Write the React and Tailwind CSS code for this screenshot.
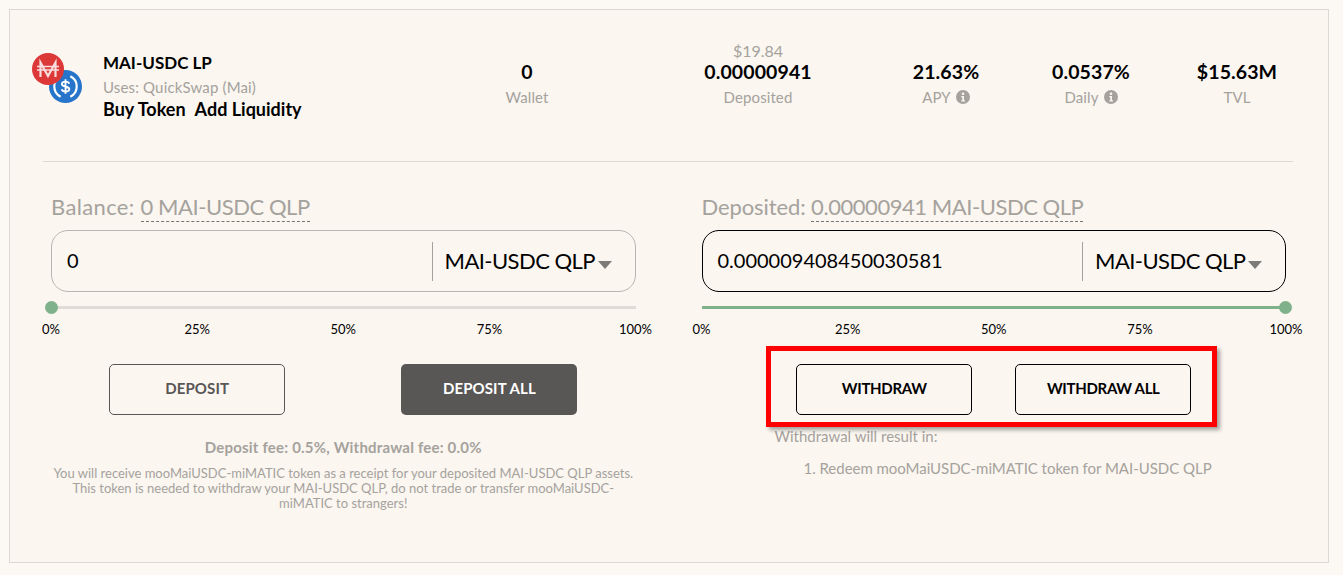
function Stat({ top, value, label, info, width = "w-[100px]", margin = "" }) {
  return (
    <div className={`flex flex-col items-center ${width} ${margin}`}>
      {top && <div className="text-[16px] leading-[20px] text-[#a5a29d] mb-[-1px]">{top}</div>}
      <div className="text-[19.5px] leading-[24px] font-bold text-black tracking-[0.1px]">{value}</div>
      <div className="mt-[1px] flex items-center gap-[5px] text-[15px] leading-[24px] text-[#a5a29d] tracking-[0.1px]">
        {label}
        {info && (
          <svg width="14" height="14" viewBox="0 0 14 14" className="shrink-0">
            <circle cx="7" cy="7" r="7" fill="#a5a29d" />
            <circle cx="7" cy="3.7" r="1.3" fill="#fbf6f0" />
            <path d="M5.3 6h2.7v4.2h1v1.2H5.3v-1.2h1V7.2h-1z" fill="#fbf6f0" />
          </svg>
        )}
      </div>
    </div>
  );
}

function TokenIcons() {
  return (
    <div className="relative w-[50px] h-[50px] shrink-0">
      <svg width="33" height="33" viewBox="0 0 34 34" className="absolute left-[17px] top-[17px]">
        <circle cx="17" cy="17" r="17" fill="#2775ca" />
        <path d="M12 6.500a11.700 11.700 0 0 0 0 21" fill="none" stroke="#fff" strokeWidth="2.200" />
        <path d="M22 6.500a11.700 11.700 0 0 1 0 21" fill="none" stroke="#fff" strokeWidth="2.200" />
        <path d="M20.800 14.200c-.4-1.500-1.800-2.200-3.800-2.200-2.300 0-3.700 1-3.700 2.500 0 3.900 7.700 1.600 7.700 5.200 0 1.700-1.600 2.600-3.900 2.600-2.200 0-3.600-.8-4-2.400M17 9.500v15" fill="none" stroke="#fff" strokeWidth="1.900" />
      </svg>
      <svg width="32" height="32" viewBox="0 0 32 32" className="absolute left-0 top-0">
        <circle cx="16" cy="16" r="16" fill="#dc3838" />
        <path d="M8.500 24V9.500L16 23l7.500-13.500V24" fill="none" stroke="#f9dcdc" strokeWidth="2.200" />
        <path d="M5 13.500h22M5 17h22" stroke="#f9dcdc" strokeWidth="1.300" />
      </svg>
    </div>
  );
}

function Caret() {
  return (
    <svg width="14" height="8" viewBox="0 0 14 8" className="shrink-0 mt-[9px] ml-[3px]">
      <path d="M0 0h14L7 8z" fill="#7d7b78" />
    </svg>
  );
}

function Panel({ label, amount, value, active, pct, labelClass }) {
  return (
    <div className="w-[584.5px]">
      <div className="h-[44px] flex items-start pt-[7px] text-[22px] leading-[28px] text-[#a5a29d]">
        <span className={labelClass}>{label}:&nbsp;</span>
        <span className="tracking-[-0.45px] border-b border-dashed border-[#77746f] h-[29px]">{amount}</span>
      </div>
      <div className={`h-[62px] rounded-[17px] border flex items-center ${active ? "border-black" : "border-[#b9b6b1]"}`}>
        <div className="flex-1 pl-[15px] pb-[2px] text-[20px] text-black">{value}</div>
        <div className="w-px h-[39px] bg-[#a5a29d]" />
        <div className="w-[202px] pl-[12px] pb-[2px] flex items-center text-[22px] tracking-[-0.55px] text-black">
          MAI-USDC QLP
          <Caret />
        </div>
      </div>
      <div className="relative mt-[14px] h-[3px] bg-[#e0dbd6]">
        {pct > 0 && <div className="h-full w-full bg-[#7fb28b]" />}
        <div className={`absolute top-[-5px] w-[13px] h-[13px] rounded-full bg-[#7fb28b] ${pct > 0 ? "right-[-6px]" : "left-[-6px]"}`} />
      </div>
      <div className="mt-[12px] flex justify-between mx-[-20px] text-[13px] leading-[16px] text-black">
        {["0%", "25%", "50%", "75%", "100%"].map((t) => (
          <span key={t} className="w-[40px] text-center">{t}</span>
        ))}
      </div>
    </div>
  );
}

function Btn({ children, kind }) {
  const styles = {
    outline: "border border-[#595755] text-[#595755] tracking-[0.1px]",
    solid: "bg-[#595755] text-white tracking-[0.1px]",
    black: "border border-black text-black tracking-[-0.3px]",
  };
  return (
    <button className={`w-[176px] h-[51px] rounded-[5px] pb-[2px] text-[15px] font-bold ${styles[kind]}`}>
      {children}
    </button>
  );
}

export default function App() {
  return (
    <div className="min-h-[575px] bg-[#fcf9f5] p-[9px] font-['Lato','Open_Sans',sans-serif]">
      <div className="relative w-[1320px] h-[554px] border border-[#ddd8d2] bg-[#fbf6f0]">
        <div className="h-[151px] flex items-start pl-[22px] pt-[30px]">
          <div className="flex w-[445px] pt-[13px]">
            <TokenIcons />
            <div className="ml-[21px] mt-[-2px]">
              <div className="text-[17px] leading-[24px] font-bold text-black">MAI-USDC LP</div>
              <div className="text-[15px] leading-[24px] text-[#a5a29d] tracking-[0.15px]">Uses: QuickSwap (Mai)</div>
              <div className="text-[18px] leading-[20px] font-bold text-black">
                <span>Buy Token</span>
                <span className="ml-[9px]">Add Liquidity</span>
              </div>
            </div>
          </div>
          <div className="flex items-end h-[69px]">
            <Stat value="0" label="Wallet" />
            <Stat top="$19.84" value="0.00000941" label="Deposited" width="w-[200px]" margin="ml-[81px]" />
            <Stat value="21.63%" label="APY" info margin="ml-[38px]" />
            <Stat value="0.0537%" label="Daily" info margin="ml-[45px]" />
            <Stat value="$15.63M" label="TVL" margin="ml-[46px]" />
          </div>
        </div>
        <div className="ml-[33px] mr-[35px] h-px bg-[#ddd8d2]" />
        <div className="flex gap-[66px] pl-[41px] pt-[24px]">
          <div>
            <Panel label="Balance" labelClass="tracking-[0.35px]" amount="0 MAI-USDC QLP" value="0" pct={0} />
            <div className="flex mt-[27px]">
              <div className="flex-1 flex justify-center"><Btn kind="outline">DEPOSIT</Btn></div>
              <div className="flex-1 flex justify-center"><Btn kind="solid">DEPOSIT ALL</Btn></div>
            </div>
            <div className="mt-[22px] text-center text-[15px] leading-[20px] font-bold text-[#a5a29d] tracking-[0.2px]">
              Deposit fee: 0.5%, Withdrawal fee: 0.0%
            </div>
            <div className="mt-[9px] text-center text-[13px] leading-[15px] text-[#a5a29d]">
              You will receive mooMaiUSDC-miMATIC token as a receipt for your deposited MAI-USDC QLP assets.<br />
              This token is needed to withdraw your MAI-USDC QLP, do not trade or transfer mooMaiUSDC-<br />
              miMATIC to strangers!
            </div>
          </div>
          <div>
            <Panel label="Deposited" labelClass="tracking-[-0.1px]" amount="0.00000941 MAI-USDC QLP" value="0.000009408450030581" active pct={100} />
            <div className="flex justify-center mt-[27px]">
              <div className="flex w-[438px]">
                <div className="flex-1 flex justify-center"><Btn kind="black">WITHDRAW</Btn></div>
                <div className="flex-1 flex justify-center"><Btn kind="black">WITHDRAW ALL</Btn></div>
              </div>
            </div>
            <div className="mt-[11px] ml-[73px] text-[15px] leading-[20px] text-[#a5a29d]">Withdrawal will result in:</div>
            <div className="mt-[12px] ml-[102px] text-[15px] leading-[20px] text-[#a5a29d] tracking-[-0.03px]">1. Redeem mooMaiUSDC-miMATIC token for MAI-USDC QLP</div>
          </div>
        </div>
        <div className="absolute left-[756px] top-[336px] w-[451px] h-[81px] border-[5px] border-[#ff0000] shadow-[3px_3px_4px_rgba(0,0,0,0.35)]" />
      </div>
    </div>
  );
}
